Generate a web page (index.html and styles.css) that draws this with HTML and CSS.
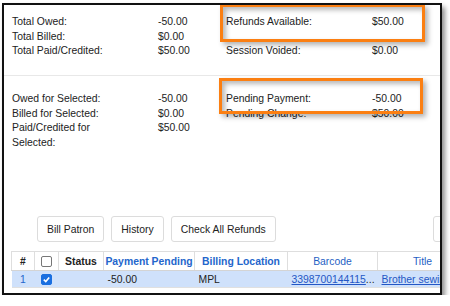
FILE: index.html
```html
<!DOCTYPE html>
<html lang="en">
<head>
    <meta charset="UTF-8">
    <title>Refunds</title>
    <link rel="stylesheet" href="styles.css">
</head>
<body>

    <div class="frame">
        <div class="summary totals">
            <div class="col">
                <div class="line"><span class="label">Total Owed:</span><span class="value strong">-50.00</span></div>
                <div class="line"><span class="label">Total Billed:</span><span class="value">$0.00</span></div>
                <div class="line"><span class="label">Total Paid/Credited:</span><span class="value">$50.00</span></div>
            </div>
            <div class="col right">
                <div class="line"><span class="label">Refunds Available:</span><span class="value">$50.00</span></div>
                <div class="line"></div>
                <div class="line"><span class="label">Session Voided:</span><span class="value">$0.00</span></div>
            </div>
        </div>

        <div class="summary selected">
            <div class="col">
                <div class="line"><span class="label">Owed for Selected:</span><span class="value">-50.00</span></div>
                <div class="line"><span class="label">Billed for Selected:</span><span class="value">$0.00</span></div>
                <div class="line"><span class="label">Paid/Credited for Selected:</span><span class="value">$50.00</span></div>
            </div>
            <div class="col right">
                <div class="line"><span class="label">Pending Payment:</span><span class="value strong">-50.00</span></div>
                <div class="line"><span class="label">Pending Change:</span><span class="value">$50.00</span></div>
            </div>
        </div>

        <div class="actions">
            <button class="btn">Bill Patron</button>
            <button class="btn">History</button>
            <button class="btn">Check All Refunds</button>
            <button class="btn extra">Refund</button>
        </div>

        <table class="grid">
            <colgroup>
                <col style="width:23px">
                <col style="width:24px">
                <col style="width:45px">
                <col style="width:91px">
                <col style="width:93px">
                <col style="width:90px">
                <col style="width:90px">
            </colgroup>
            <thead>
                <tr>
                    <th class="plain">#</th>
                    <th class="plain"><span class="cb"></span></th>
                    <th class="plain">Status</th>
                    <th>Payment Pending</th>
                    <th>Billing Location</th>
                    <th class="light">Barcode</th>
                    <th class="light">Title</th>
                </tr>
            </thead>
            <tbody>
                <tr class="picked">
                    <td class="num">1</td>
                    <td class="mid"><span class="cb on"><svg viewBox="0 0 10 10" width="9" height="9"><path d="M2 5.2 L4.2 7.3 L8 2.8" fill="none" stroke="#fff" stroke-width="1.8"/></svg></span></td>
                    <td></td>
                    <td class="pad">-50.00</td>
                    <td class="pad">MPL</td>
                    <td class="pad"><a href="#">3398700144115</a>...</td>
                    <td class="pad"><a href="#">Brother sewing machine</a></td>
                </tr>
            </tbody>
        </table>

        <div class="callout refunds"></div>
        <div class="callout pending"></div>
    </div>

</body>
</html>
```

FILE: styles.css
```css
body {
    margin: 0;
    padding: 0;
    background-color: #fff;
    font-family: "Liberation Sans", Arial, sans-serif;
    font-size: 10.4px;
    color: #222;
}

.frame {
    position: relative;
    width: 436px;
    height: 288px;
    margin: 3px 0 0 2px;
    border: 2px solid #111;
    overflow: hidden;
    background-color: #fff;
    box-shadow: 3px 4px 5px rgba(0, 0, 0, 0.45);
}

.summary {
    display: flex;
    padding-left: 8px;
}

.totals {
    padding-top: 10px;
    height: 60px;
    border-bottom: 1px solid #e8e8e8;
}

.selected {
    padding-top: 16px;
    height: 58px;
}

.col {
    width: 220px;
}

.line {
    display: flex;
    min-height: 14.5px;
    line-height: 14.5px;
}

.label {
    width: 112px;
    padding-right: 34px;
}

.right .label {
    width: 136px;
    padding-right: 10px;
}

.actions {
    display: flex;
    gap: 7px;
    margin-top: 66px;
    padding-left: 33px;
    height: 26px;
}

.btn {
    height: 26px;
    padding: 0 9px;
    border: 1px solid #dcdcdc;
    border-radius: 3px;
    background-color: #fff;
    font-family: inherit;
    font-size: 10.4px;
    color: #222;
    white-space: nowrap;
}

.btn.extra {
    margin-left: 150px;
}

.grid {
    table-layout: fixed;
    border-collapse: collapse;
    margin: 9px 0 0 7px;
    width: 456px;
}

.grid th {
    height: 18px;
    padding: 0;
    border: 1px solid #dedede;
    border-bottom-color: #d4d4d4;
    color: #2466cc;
    font-weight: bold;
    white-space: nowrap;
    overflow: hidden;
    text-align: center;
}

.grid th.plain {
    color: #222;
}

.grid th.light {
    font-weight: normal;
    color: #1f5fc4;
}

.grid td {
    height: 16px;
    padding: 0;
    white-space: nowrap;
    overflow: hidden;
}

.picked td {
    background-color: #cfe1fb;
    border-bottom: 1px solid #e0e0e0;
}

.grid .num {
    color: #2466cc;
    text-align: center;
}

.grid .mid {
    text-align: center;
}

.grid .pad {
    padding-left: 4px;
}

.grid a {
    color: #2457c5;
}

.cb {
    display: inline-block;
    width: 11px;
    height: 11px;
    box-sizing: border-box;
    border: 1px solid #777;
    border-radius: 2px;
    vertical-align: -2px;
    background-color: #fff;
}

.cb.on {
    border-color: #1a6fe0;
    background-color: #1a6fe0;
}

.cb svg {
    display: block;
}

.callout {
    position: absolute;
    border: 3px solid #fb7f12;
    box-shadow: 3px 3px 5px rgba(0, 0, 0, 0.3), inset 3px 3px 5px rgba(0, 0, 0, 0.28);
}

.refunds {
    left: 216px;
    top: -1px;
    width: 199px;
    height: 32px;
}

.pending {
    left: 215px;
    top: 73px;
    width: 198px;
    height: 30px;
}
```
